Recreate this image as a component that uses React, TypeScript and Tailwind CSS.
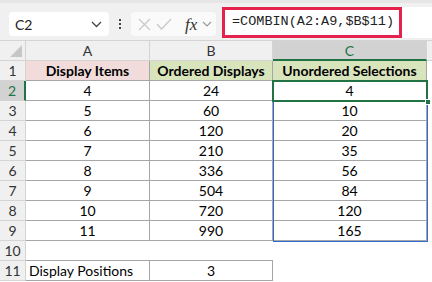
import React from 'react';

const rows = [
  { a: '4', b: '24', c: '4' },
  { a: '5', b: '60', c: '10' },
  { a: '6', b: '120', c: '20' },
  { a: '7', b: '210', c: '35' },
  { a: '8', b: '336', c: '56' },
  { a: '9', b: '504', c: '84' },
  { a: '10', b: '720', c: '120' },
  { a: '11', b: '990', c: '165' },
];

const cellFont = { fontFamily: 'Lato, "Open Sans", sans-serif' };

function RowHead({ n, active }: { n: number; active?: boolean }) {
  return (
    <div
      className={`h-[20px] w-[26px] flex items-center justify-center text-[14px] border-b border-r border-[#d4d4d4] ${
        active ? 'bg-[#d2d2d2] text-[#217346] border-r-2 border-r-[#217346]' : 'bg-[#f0f0f0] text-[#333]'
      }`}
    >
      {n}
    </div>
  );
}

export default function App() {
  return (
    <div className="w-[432px] h-[282px] overflow-hidden bg-white relative" style={cellFont}>
      {/* formula bar */}
      <div className="h-[41px] bg-[#f0f0f0] border-t-[3px] border-t-[#e6e6e6] flex items-start pt-[6px] border-b border-b-[#d4d4d4]">
        <div className="ml-[9px] mt-[3px] w-[100px] h-[24px] bg-white rounded-[4px] flex items-center justify-between px-[6px] text-[14px] text-[#222]">
          <span>C2</span>
          <svg width="11" height="7" viewBox="0 0 11 7" className="mr-[1px]">
            <path d="M1 1l4.5 4.5L10 1" fill="none" stroke="#444" strokeWidth="1.3" />
          </svg>
        </div>
        <div className="w-[22px] h-[30px] flex flex-col items-center justify-center gap-[2px]">
          <span className="w-[2px] h-[2px] bg-[#444]" />
          <span className="w-[2px] h-[2px] bg-[#444]" />
          <span className="w-[2px] h-[2px] bg-[#444]" />
        </div>
        <div className="mt-[3px] w-[85px] h-[24px] bg-[#fafafa] rounded-[4px] flex items-center pl-[7px] gap-[5px]">
          <svg width="13" height="13" viewBox="0 0 13 13">
            <path d="M1 1l11 11M12 1L1 12" stroke="#c8c8c8" strokeWidth="1.2" />
          </svg>
          <svg width="16" height="12" viewBox="0 0 16 12">
            <path d="M1 6l4.5 5L15 1" fill="none" stroke="#c8c8c8" strokeWidth="1.2" />
          </svg>
          <span className="ml-[8px] text-[17px] italic text-[#333] leading-none" style={{ fontFamily: '"Liberation Serif", serif' }}>
            fx
          </span>
          <svg width="10" height="6" viewBox="0 0 10 6">
            <path d="M1 1l4 4 4-4" fill="none" stroke="#999" strokeWidth="1.1" />
          </svg>
        </div>
        <div className="ml-[6px] flex-1 h-[31px] -mt-[2px] bg-white">
          <div
            className="w-[180px] h-[31px] border-[3px] border-[#e5224b] flex items-center pl-[7px] text-[13.5px] text-[#222]"
            style={{ fontFamily: '"Liberation Mono", monospace' }}
          >
            =COMBIN(A2:A9,$B$11)
          </div>
        </div>
      </div>

      {/* grid */}
      <div className="grid grid-cols-[26px_124px_123px_154px_5px] text-[14px] text-black">
        {/* column headers */}
        <div className="h-[20px] bg-[#f0f0f0] border-r border-b border-[#d4d4d4] relative">
          <div
            className="absolute right-[3px] bottom-[3px] w-[12px] h-[12px] bg-[#c6c6c6]"
            style={{ clipPath: 'polygon(100% 0, 100% 100%, 0 100%)' }}
          />
        </div>
        <div className="h-[20px] bg-[#f0f0f0] border-r border-b border-[#d4d4d4] flex items-center justify-center text-[#333]">A</div>
        <div className="h-[20px] bg-[#f0f0f0] border-r border-b border-[#d4d4d4] flex items-center justify-center text-[#333]">B</div>
        <div className="h-[20px] bg-[#d2d2d2] border-r border-[#d4d4d4] border-b-2 border-b-[#217346] flex items-center justify-center text-[#217346]">C</div>
        <div className="h-[20px] bg-[#f0f0f0] border-b border-[#d4d4d4]" />

        {/* row 1 */}
        <RowHead n={1} />
        <div className="h-[20px] bg-[#f2dcdb] border-r border-b border-[#a6a6a6] flex items-center justify-center font-bold">Display Items</div>
        <div className="h-[20px] bg-[#d8e4bc] border-r border-b border-[#a6a6a6] flex items-center justify-center font-bold">Ordered Displays</div>
        <div className="h-[20px] bg-[#d8e4bc] border-r border-b border-[#a6a6a6] flex items-center justify-center font-bold">Unordered Selections</div>
        <div />

        {rows.map((r, i) => (
          <React.Fragment key={i}>
            <RowHead n={i + 2} active={i === 0} />
            <div className="h-[20px] border-r border-b border-[#a6a6a6] flex items-center justify-center">{r.a}</div>
            <div className="h-[20px] border-r border-b border-[#a6a6a6] flex items-center justify-center">{r.b}</div>
            <div className="h-[20px] border-r border-b border-[#a6a6a6] flex items-center justify-center">{r.c}</div>
            <div />
          </React.Fragment>
        ))}

        {/* row 10 */}
        <RowHead n={10} />
        <div className="h-[20px] border-b border-[#a6a6a6]" />
        <div className="h-[20px] border-b border-[#a6a6a6]" />
        <div className="h-[20px]" />
        <div />

        {/* row 11 */}
        <RowHead n={11} />
        <div className="h-[20px] border-r border-b border-[#a6a6a6] flex items-center pl-[3px]">Display Positions</div>
        <div className="h-[20px] border-r border-b border-[#a6a6a6] flex items-center justify-center">3</div>
        <div className="h-[20px]" />
        <div />
      </div>

      {/* spill range highlight C2:C9 */}
      <div className="absolute left-[273px] top-[81px] w-[155px] h-[161px] border border-[#2f6bd0] pointer-events-none" />
      {/* active cell C2 */}
      <div className="absolute left-[272px] top-[80px] w-[156px] h-[22px] border-2 border-[#217346] pointer-events-none" />
      <div className="absolute left-[425px] top-[99px] w-[6px] h-[6px] bg-[#217346] border border-white" />
    </div>
  );
}
